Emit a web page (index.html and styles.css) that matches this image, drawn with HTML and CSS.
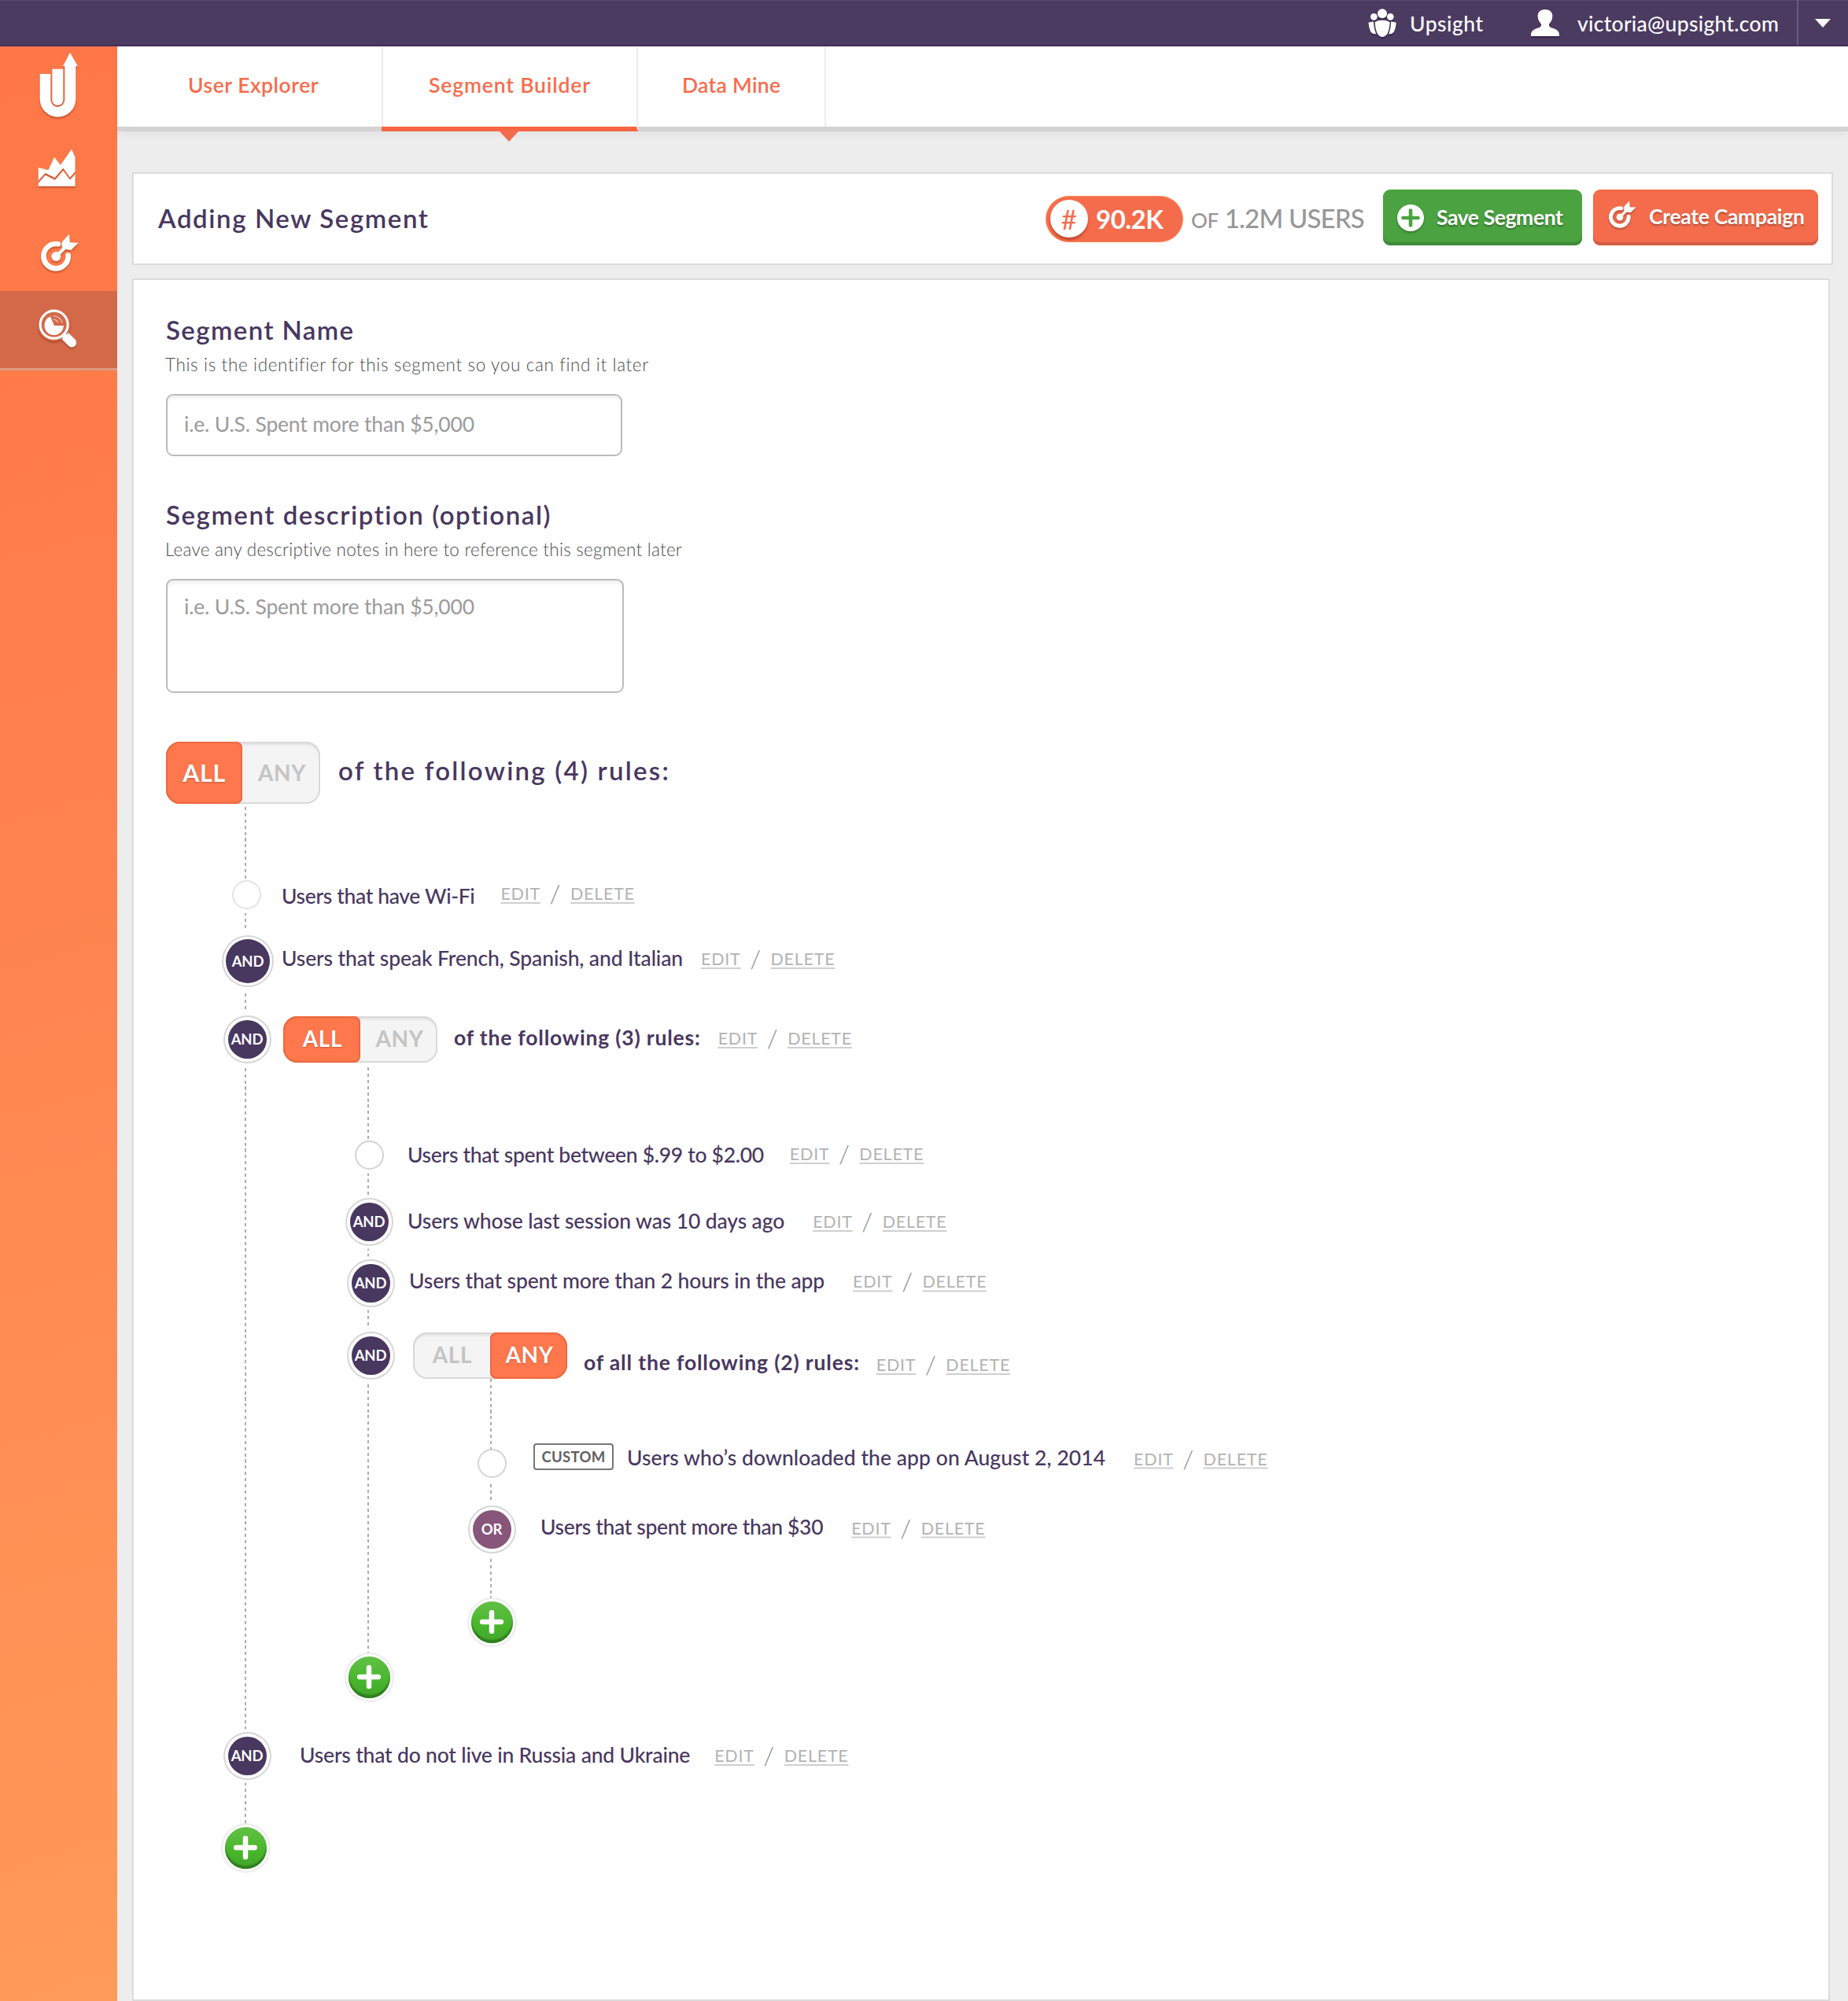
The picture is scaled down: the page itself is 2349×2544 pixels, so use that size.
FILE: index.html
```html
<!DOCTYPE html>
<html lang="en">
<head>
<meta charset="utf-8">
<title>Upsight – Segment Builder</title>
<link rel="stylesheet" href="styles.css">
</head>
<body>
<svg class="sprite" aria-hidden="true">
  <symbol id="target" viewBox="156 891 145 148">
    <path d="M222 931A47 47 0 1 0 260 974" fill="none" stroke="#fff" stroke-width="20" stroke-linecap="round"/>
    <circle cx="214" cy="978" r="18" fill="#fff"/>
    <path d="M214 978L250 942" stroke="#fff" stroke-width="13"/>
    <path d="M236 923L264 893L267 925L299 926L271 954L250 951L236 943Z" fill="#fff"/>
  </symbol>
  <symbol id="plus" viewBox="0 0 30 30">
    <path d="M15 3V27M3 15H27" stroke="#fff" stroke-width="6.5" stroke-linecap="round"/>
  </symbol>
</svg>

<header class="topbar">
  <div class="account account--org">
    <svg class="account__icon" width="36" height="36" viewBox="54 33 108 108" fill="#fff">
      <circle cx="108" cy="52" r="18"/><circle cx="76" cy="64" r="13"/><circle cx="139" cy="64" r="13"/>
      <path d="M80 84Q94 76 108 77Q122 76 137 84Q136 112 127 130Q118 141 108 141Q98 141 90 130Q81 112 80 84Z"/>
      <path d="M55 86L74 82Q76 108 84 130Q72 131 64 122Q57 108 55 86Z"/>
      <path d="M161 86L142 82Q141 108 133 130Q145 131 152 122Q160 108 161 86Z"/>
    </svg>
    <span>Upsight</span>
  </div>
  <div class="account account--user">
    <svg class="account__icon" width="36" height="34" viewBox="676 34 108 102" fill="#fff">
      <path d="M730 34C750 34 759 46 758 62C757 76 751 84 745 90Q744 99 750 102C768 108 784 113 784 130V136H676V130C676 113 692 108 710 102Q716 99 715 90C709 84 703 76 702 62C701 46 710 34 730 34Z"/>
    </svg>
    <span>victoria@upsight.com</span>
  </div>
  <button class="topbar__menu" aria-label="Account menu"></button>
</header>

<div class="layout">
  <nav class="sidebar">
    <a class="sidebar__item sidebar__item--logo">
      <svg width="49.3" height="84" viewBox="150 198 148 252" fill="#fff">
        <path d="M152 282H193V381A27 27 0 0 0 247 381V253H240L267 200L297 253H289V378A68.5 68.5 0 0 1 152 378Z"/>
        <path d="M199 263H241V381A21 21 0 0 1 199 381Z"/>
      </svg>
    </a>
    <a class="sidebar__item sidebar__item--reports">
      <svg width="48.3" height="49.3" viewBox="145 568 145 148" fill="#fff">
        <path d="M147 640L185 650L208 600L232 630L274 570L288 600V655L268 678L242 642L210 679L174 661L147 690Z"/>
        <path d="M147 700L174 669L211 688L242 652L268 687L288 665V711H147Z"/>
      </svg>
    </a>
    <a class="sidebar__item sidebar__item--campaigns">
      <svg width="48.3" height="49.3"><use href="#target"/></svg>
    </a>
    <a class="sidebar__item sidebar__item--active">
      <svg width="49" height="49" viewBox="147 1180 147 147">
        <path d="M246 1280L274 1308" stroke="#fff" stroke-width="35" stroke-linecap="round"/>
        <circle cx="206" cy="1240" r="62" fill="#d4694a"/>
        <circle cx="206" cy="1239" r="52.5" fill="none" stroke="#fff" stroke-width="9.5"/>
        <path d="M232 1282L246 1268L262 1284L248 1298Z" fill="#fff"/>
        <path d="M207 1243L192 1208A37 37 0 1 0 243 1243Z" fill="#fff"/>
        <path d="M203 1206A36 36 0 0 1 238 1232M203 1218Q214 1220 222 1230" fill="none" stroke="#fff" stroke-opacity=".6" stroke-width="4"/>
      </svg>
    </a>
  </nav>

  <div class="content">
    <nav class="tabs">
      <a class="tab tab--explorer">User Explorer</a>
      <a class="tab tab--builder tab--active">Segment Builder</a>
      <a class="tab tab--mine">Data Mine</a>
    </nav>

    <main class="page">
      <section class="card heading">
        <h1 class="heading__title">Adding New Segment</h1>
        <div class="pill"><span class="pill__hash">#</span><span class="pill__count">90.2K</span></div>
        <p class="total"><span class="total__of">OF</span><span class="total__users">1.2M USERS</span></p>
        <button class="btn btn--save">
          <svg width="34" height="34" viewBox="0 0 34 34"><circle cx="17" cy="17" r="17" fill="#fff"/><path d="M17 7.5V26.5M7.5 17H26.5" stroke="#4aa240" stroke-width="4.6" stroke-linecap="round"/></svg>
          <span>Save Segment</span>
        </button>
        <button class="btn btn--campaign">
          <svg width="35" height="36"><use href="#target"/></svg>
          <span>Create Campaign</span>
        </button>
      </section>

      <section class="card builder">
        <div class="field">
          <label class="field__label field__label--name" for="name">Segment Name</label>
          <p class="field__hint field__hint--name">This is the identifier for this segment so you can find it later</p>
          <input class="field__input" id="name" placeholder="i.e. U.S. Spent more than $5,000">
        </div>
        <div class="field">
          <label class="field__label field__label--desc" for="desc">Segment description (optional)</label>
          <p class="field__hint field__hint--desc">Leave any descriptive notes in here to reference this segment later</p>
          <textarea class="field__input field__input--area" id="desc" placeholder="i.e. U.S. Spent more than $5,000"></textarea>
        </div>

        <div class="root-group">
          <div class="toggle toggle--large"><span class="toggle__opt toggle__opt--on">ALL</span><span class="toggle__opt">ANY</span></div>
          <span class="root-group__text">of the following (4) rules:</span>
        </div>

        <ul class="rules rules--root">
          <li class="rule rule--wifi">
            <span class="slot"><i class="node node--first node--faint"></i></span>
            <span class="rule__text">Users that have Wi-Fi</span>
            <span class="actions"><a>EDIT</a><i>/</i><a>DELETE</a></span>
          </li>
          <li class="rule rule--languages">
            <span class="slot"><b class="node node--large">AND</b></span>
            <span class="rule__text">Users that speak French, Spanish, and Italian</span>
            <span class="actions"><a>EDIT</a><i>/</i><a>DELETE</a></span>
          </li>
          <li class="rule rule--group-all">
            <span class="slot"><b class="node">AND</b></span>
            <div class="toggle"><span class="toggle__opt toggle__opt--on">ALL</span><span class="toggle__opt">ANY</span></div>
            <span class="rule__text rule__text--group">of the following (3) rules:</span>
            <span class="actions"><a>EDIT</a><i>/</i><a>DELETE</a></span>
          </li>
          <li>
            <ul class="rules rules--nested">
              <li class="rule rule--spent-range">
                <span class="slot"><i class="node node--first"></i></span>
                <span class="rule__text">Users that spent between $.99 to $2.00</span>
                <span class="actions"><a>EDIT</a><i>/</i><a>DELETE</a></span>
              </li>
              <li class="rule rule--session">
                <span class="slot"><b class="node">AND</b></span>
                <span class="rule__text">Users whose last session was 10 days ago</span>
                <span class="actions"><a>EDIT</a><i>/</i><a>DELETE</a></span>
              </li>
              <li class="rule rule--hours">
                <span class="slot"><b class="node">AND</b></span>
                <span class="rule__text">Users that spent more than 2 hours in the app</span>
                <span class="actions"><a>EDIT</a><i>/</i><a>DELETE</a></span>
              </li>
              <li class="rule rule--group-any">
                <span class="slot"><b class="node">AND</b></span>
                <div class="toggle"><span class="toggle__opt">ALL</span><span class="toggle__opt toggle__opt--on">ANY</span></div>
                <span class="rule__text rule__text--group">of all the following (2) rules:</span>
                <span class="actions"><a>EDIT</a><i>/</i><a>DELETE</a></span>
              </li>
              <li>
                <ul class="rules rules--deep">
                  <li class="rule rule--download">
                    <span class="slot"><i class="node node--first"></i></span>
                    <span class="tag">CUSTOM</span>
                    <span class="rule__text">Users who’s downloaded the app on August 2, 2014</span>
                    <span class="actions"><a>EDIT</a><i>/</i><a>DELETE</a></span>
                  </li>
                  <li class="rule rule--spent-min">
                    <span class="slot"><b class="node node--or">OR</b></span>
                    <span class="rule__text">Users that spent more than $30</span>
                    <span class="actions"><a>EDIT</a><i>/</i><a>DELETE</a></span>
                  </li>
                  <li class="rule rule--add-deep">
                    <span class="slot"><button class="node node--add" aria-label="Add rule"><svg width="30" height="30"><use href="#plus"/></svg></button></span>
                  </li>
                </ul>
              </li>
              <li class="rule rule--add-nested">
                <span class="slot"><button class="node node--add" aria-label="Add rule"><svg width="30" height="30"><use href="#plus"/></svg></button></span>
              </li>
            </ul>
          </li>
          <li class="rule rule--countries">
            <span class="slot"><b class="node">AND</b></span>
            <span class="rule__text">Users that do not live in Russia and Ukraine</span>
            <span class="actions"><a>EDIT</a><i>/</i><a>DELETE</a></span>
          </li>
          <li class="rule rule--add-root">
            <span class="slot"><button class="node node--add" aria-label="Add rule"><svg width="30" height="30"><use href="#plus"/></svg></button></span>
          </li>
        </ul>
      </section>
    </main>
  </div>
</div>
</body>
</html>
```
FILE: styles.css
```css
*, *::before, *::after { box-sizing: border-box; }

body {
  margin: 0;
  height: 2544px;
  display: flex;
  flex-direction: column;
  background: #ededed;
  color: #48375f;
  font: 500 26.5px/32px Lato, "Liberation Sans", sans-serif;
  overflow: hidden;
}

ul, p, h1 { margin: 0; padding: 0; list-style: none; }
i { font-style: normal; }
button { border: 0; padding: 0; font: inherit; color: inherit; }
svg { display: block; flex: none; }
.sprite { position: absolute; width: 0; height: 0; }

/* Top bar */
.topbar {
  flex: none;
  height: 59px;
  display: flex;
  justify-content: flex-end;
  background: #4c3b61;
  border-top: 1px solid #5a4a70;
  border-bottom: 2px solid #423059;
  color: #fff;
}
.account { display: flex; align-items: center; white-space: nowrap; }
.account__icon { filter: drop-shadow(0 2px 0 rgba(40, 24, 58, .6)); }
.account span { padding-top: 2px; }
.account--org { width: 207px; gap: 17px; letter-spacing: .5px; }
.account--user { width: 338px; gap: 23px; letter-spacing: .28px; }
.account--user .account__icon { margin-bottom: 1px; }
.topbar__menu {
  width: 65px;
  display: flex;
  align-items: center;
  padding-left: 21px;
  background: none;
  border-left: 2px solid #6b5c80;
}
.topbar__menu::before {
  content: "";
  border: 10px solid transparent;
  border-top: 11px solid #fff;
  border-bottom: 0;
}

.layout { flex: 1; display: flex; min-height: 0; }

/* Sidebar */
.sidebar {
  flex: none;
  width: 149px;
  background: linear-gradient(165deg, #ff7748 0%, #ff7b4a 20%, #ff9a5a 100%);
}
.sidebar__item { display: flex; }
.sidebar__item svg { filter: drop-shadow(0 2px 1px rgba(120, 40, 10, .45)); }
.sidebar__item--logo { height: 101px; padding: 7px 0 0 50px; }
.sidebar__item--reports { height: 110px; padding: 29px 0 0 48px; }
.sidebar__item--campaigns { height: 100px; padding: 27px 0 0 52px; }
.sidebar__item--active {
  height: 101px;
  padding: 23px 0 0 49px;
  background: #d4694a;
  border-bottom: 3px solid #de9a80;
}

.content { flex: 1; display: flex; flex-direction: column; min-width: 0; }

/* Tabs */
.tabs {
  flex: none;
  height: 108px;
  display: flex;
  background: #fff;
  border-bottom: 6px solid #d3d3d3;
  box-shadow: 0 4px 10px rgba(0, 0, 0, .05);
}
.tab {
  height: 102px;
  border-right: 2px solid #ededed;
  line-height: 99px;
  font-weight: 600;
  color: #f76c4c;
}
.tab--explorer { width: 338px; padding-left: 90px; letter-spacing: .55px; }
.tab--builder { width: 324px; letter-spacing: .85px; }
.tab--mine { width: 239px; padding-left: 56px; letter-spacing: .3px; }
.tab--active {
  position: relative;
  height: 108px;
  margin-left: -2px;
  width: 326px;
  padding-left: 60px;
  border-bottom: 6px solid #f76640;
}
.tab--active::after {
  content: "";
  position: absolute;
  left: 149px;
  top: 107px;
  border: 13px solid transparent;
  border-top: 14px solid #f46b4c;
  border-bottom: 0;
}

/* Cards */
.page { flex: 1; display: flex; flex-direction: column; gap: 17px; padding: 52px 0 0 19px; }
.card { background: #fff; border: 2px solid #dcdcdc; }

.heading {
  width: 2162px;
  height: 118px;
  display: flex;
  align-items: center;
  padding: 0 17px 0 31px;
}
.heading__title { margin: 0 auto 2px 0; font: 600 33px/40px Lato, sans-serif; letter-spacing: 1.6px; }

.pill {
  width: 175px;
  height: 59px;
  display: flex;
  align-items: center;
  gap: 10px;
  padding-left: 5px;
  border: 1.5px solid #ff8a55;
  border-radius: 30px;
  background: #f46c4c;
  color: #fff;
}
.pill__hash {
  width: 48px;
  height: 48px;
  border-radius: 50%;
  background: #fff;
  box-shadow: 0 3px 3px rgba(150, 40, 20, .55);
  color: #f46c4c;
  font-size: 35px;
  font-weight: 400;
  line-height: 48px;
  text-align: center;
}
.pill__count { font-size: 33px; font-weight: 700; letter-spacing: -.5px; }
.total {
  width: 254px;
  display: flex;
  align-items: baseline;
  justify-content: space-between;
  padding: 0 24px 0 10px;
  color: #979797;
  white-space: nowrap;
}
.total__of { font-size: 26px; font-weight: 500; letter-spacing: -.3px; }
.total__users { font-size: 33px; font-weight: 500; letter-spacing: -.8px; }

.btn {
  height: 71px;
  display: flex;
  align-items: center;
  margin-bottom: 4px;
  border-radius: 9px;
  color: #fff;
  font-weight: 700;
  white-space: nowrap;
  text-shadow: 0 2px 2px rgba(0, 0, 0, .3);
}
.btn svg { filter: drop-shadow(0 2px 1px rgba(0, 0, 0, .25)); }
.btn--save {
  width: 253px;
  gap: 16px;
  padding: 1px 0 0 18px;
  background: #4aa240;
  box-shadow: inset 0 -4px 1px #3f8a3a;
  letter-spacing: -.4px;
}
.btn--save span { margin-bottom: 1px; }
.btn--campaign {
  width: 286px;
  margin-left: 14px;
  gap: 16px;
  padding-left: 20px;
  background: #f46c4c;
  box-shadow: inset 0 -4px 1px #d45b43;
  letter-spacing: -.3px;
}
.btn--campaign svg { margin-bottom: 7px; }
.btn--campaign span { margin-bottom: 3px; }

.builder { flex: 1; width: 2158px; padding: 43px 0 0 41px; }

/* Fields */
.field + .field { margin-top: 54px; }
.field__label { display: block; font-size: 33px; font-weight: 600; line-height: 40px; }
.field__label--name { letter-spacing: 1.4px; }
.field__label--desc { letter-spacing: 1.55px; }
.field__hint { margin: 10px 0 -1px -1px; font-size: 22.5px; font-weight: 300; line-height: 30px; color: #4c4c4c; }
.field__hint--name { letter-spacing: .63px; }
.field__hint--desc { letter-spacing: .23px; }
.field__input {
  display: block;
  width: 580px;
  height: 79px;
  margin-top: 23px;
  padding: 0 21px 4px;
  border: 2px solid #bcbcbc;
  border-radius: 9px;
  background: #fff;
  box-shadow: inset 0 4px 3px rgba(0, 0, 0, .05);
  font: 400 26.5px/32px Lato, sans-serif;
  letter-spacing: -.18px;
  resize: none;
  outline: 0;
}
.field__input--area { width: 582px; height: 145px; padding-top: 17px; }
.field__input::placeholder { color: #9b9b9b; opacity: 1; }

/* ALL / ANY switch */
.toggle {
  flex: none;
  width: 196px;
  height: 59px;
  display: flex;
  border-radius: 18px;
  background: #f4f4f4;
  box-shadow: inset 0 0 0 2px #d9d9d9, inset 0 4px 3px rgba(0, 0, 0, .08);
}
.toggle__opt {
  flex: 1;
  padding-left: 2px;
  line-height: 57px;
  text-align: center;
  font-size: 28px;
  font-weight: 700;
  letter-spacing: .6px;
  color: #c4c4c4;
}
.toggle__opt--on {
  border-radius: 18px 8px 8px 18px;
  background: #ff774c;
  box-shadow: inset 0 0 0 2px #ef683f;
  color: #fff;
  text-shadow: 0 1px 2px rgba(0, 0, 0, .25);
}
.toggle__opt--on:last-child { border-radius: 8px 18px 18px 8px; }
.toggle--large { height: 79px; }
.toggle--large .toggle__opt { line-height: 78px; }
.toggle--large .toggle__opt--on { padding-left: 0; font-size: 30.5px; line-height: 79px; }

.root-group { display: flex; align-items: center; margin-top: 62px; }
.root-group__text {
  margin: 0 0 8px 23px;
  font-size: 33px;
  font-weight: 600;
  line-height: 40px;
  letter-spacing: 2.25px;
}

/* Rule tree: each list paints its dashed trunk behind the nodes */
.rules {
  --trunk-x: 29px;
  --trunk-top: 4px;
  background: repeating-linear-gradient(#adadad 0 4px, transparent 4px 7.9px)
    var(--trunk-x) var(--trunk-top) / 2px calc(100% - 60px) no-repeat;
}
.rules--root { margin-left: 71px; }
.rules--nested { --trunk-x: 28px; --trunk-top: 6px; margin-left: 157px; }
.rules--deep { --trunk-x: 28px; --trunk-top: 0px; margin-left: 156px; }

.rule {
  height: 60px;
  display: flex;
  align-items: center;
  margin-top: var(--before);
  white-space: nowrap;
}
.rules::before { content: ""; display: table; }

.slot {
  flex: none;
  width: 60px;
  height: 60px;
  display: flex;
  align-items: center;
  justify-content: center;
  translate: var(--node-shift, 0) 0;
}
.node {
  width: 49px;
  height: 49px;
  display: flex;
  align-items: center;
  justify-content: center;
  flex: none;
  border-radius: 50%;
  background: #48375f;
  box-shadow: 0 0 0 4px #fff, 0 0 0 6px #d6d6d6, 0 0 0 10px #fff;
  color: #fff;
  font-size: 18.5px;
  font-weight: 700;
  letter-spacing: -.2px;
}
.node--large { width: 56px; height: 56px; box-shadow: 0 0 0 3px #fff, 0 0 0 5px #d6d6d6, 0 0 0 10px #fff; }
.node--or { background: #87567a; }
.node--first {
  width: 37px;
  height: 37px;
  background: #fff;
  border: 2px solid #d4d4d4;
  box-shadow: 0 5px 0 #fff;
}
.node--faint { border-color: #e4e4e4; }
.node--add {
  width: 53px;
  height: 53px;
  background: linear-gradient(#62c046, #47b62b 60%, #42a52c);
  box-shadow: inset 0 -4px 2px #2f7f1e, 0 0 0 3px #fff, 0 0 0 5px #ececec;
}

.rule__text {
  margin: 1px -1px -1px calc(var(--text-gap) + 1px);
  letter-spacing: var(--track);
  translate: 0 var(--text-drop);
}
.rule__text--group { font-weight: 700; }
.rule .toggle { margin-left: var(--toggle-gap); }

.actions {
  display: flex;
  margin-left: var(--actions-gap);
  translate: 0 var(--actions-drop);
  font-size: 21.5px;
  font-weight: 400;
  letter-spacing: .75px;
  color: #b3b3b3;
}
.actions a {
  text-decoration: underline 2px #cfcfcf;
  text-underline-offset: 3px;
  text-decoration-skip-ink: none;
}
.actions i { width: 38px; text-align: center; font-size: 32px; font-weight: 300; line-height: 31px; color: #8f8f8f; }

.tag {
  width: 102px;
  height: 34px;
  margin-left: 23px;
  translate: 0 -8px;
  border: 2px solid #777;
  border-radius: 4px;
  font-size: 18.5px;
  font-weight: 700;
  line-height: 30px;
  letter-spacing: .3px;
  text-align: center;
  color: #606060;
}

.rule--wifi { --before: 85px; --node-shift: 1px; --text-gap: 15px; --track: -.35px; --text-drop: 1px; --actions-gap: 34px; --actions-drop: -1px; }
.rule--languages { --before: 25px; --node-shift: 3px; --text-gap: 15px; --track: -.12px; --text-drop: -5.5px; --actions-gap: 24px; --actions-drop: -3px; }
.rule--group-all { --before: 39px; --node-shift: 2px; --toggle-gap: 18px; --text-gap: 20px; --track: .8px; --text-drop: -3.5px; --actions-gap: 23px; --actions-drop: -1px; }
.rule--spent-range { --before: 87px; --text-gap: 18px; --track: -.3px; --text-drop: -1.5px; --actions-gap: 34px; --actions-drop: -1px; }
.rule--session { --before: 25px; --text-gap: 18px; --track: -.13px; --text-drop: -2px; --actions-gap: 37px; --actions-drop: 0px; }
.rule--hours { --before: 18px; --node-shift: 2px; --text-gap: 20px; --track: -.14px; --text-drop: -3.7px; --actions-gap: 37px; --actions-drop: -1.6px; }
.rule--group-any { --before: 32px; --node-shift: 2px; --toggle-gap: 26px; --text-gap: 20px; --track: .83px; --text-drop: 7.8px; --actions-gap: 22px; --actions-drop: 12px; }
.rule--download { --before: 77px; --text-gap: 16px; --track: .06px; --text-drop: -8px; --actions-gap: 37px; --actions-drop: -5.5px; }
.rule--spent-min { --before: 24px; --text-gap: 31px; --track: -.35px; --text-drop: -4px; --actions-gap: 37px; --actions-drop: -1.5px; }
.rule--add-deep { --before: 58px; }
.rule--add-nested { --before: 10px; }
.rule--countries { --before: 40px; --node-shift: 2px; --text-gap: 38px; --track: -.19px; --text-drop: -2px; --actions-gap: 32px; --actions-drop: 0px; }
.rule--add-root { --before: 57px; }
```
